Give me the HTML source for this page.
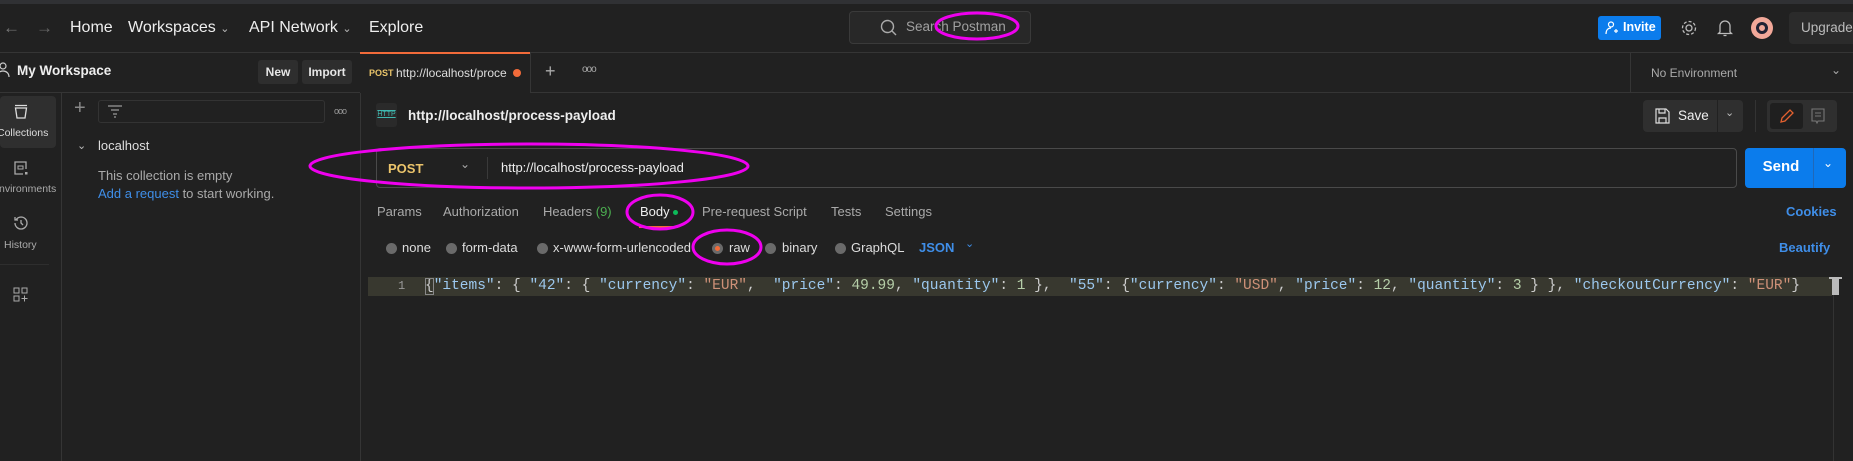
<!DOCTYPE html>
<html><head><meta charset="utf-8"><style>
*{margin:0;padding:0;box-sizing:border-box}
body{width:1853px;height:461px;background:#212121;font-family:"Liberation Sans",sans-serif;color:#e6e6e6;position:relative;overflow:hidden;font-size:13px}
.a{position:absolute;white-space:nowrap}
.ln{position:absolute;background:#353535}
.mono{font-family:"Liberation Mono",monospace}
</style></head><body>
<div class="a" style="left:0;top:0;width:1853px;height:4px;background:#303134"></div>
<div class="ln" style="left:0;top:52px;width:1853px;height:1px"></div>
<div class="ln" style="left:360px;top:92px;width:1493px;height:1px"></div>
<div class="ln" style="left:0;top:92px;width:360px;height:1px"></div>
<div class="ln" style="left:360px;top:52px;width:1px;height:409px"></div>
<div class="ln" style="left:61px;top:92px;width:1px;height:369px"></div>
<div class="ln" style="left:1630px;top:52px;width:1px;height:40px"></div>

<!-- top nav -->
<div class="a" style="left:3px;top:18px;color:#777;font-size:17px">←</div>
<div class="a" style="left:36px;top:18px;color:#666;font-size:17px">→</div>
<div class="a" style="left:70px;top:19px;font-size:16px;color:#eee">Home</div>
<div class="a" style="left:128px;top:19px;font-size:16px;color:#eee">Workspaces <span style="font-size:11px;color:#bbb">⌄</span></div>
<div class="a" style="left:249px;top:19px;font-size:16px;color:#eee">API Network <span style="font-size:11px;color:#bbb">⌄</span></div>
<div class="a" style="left:369px;top:19px;font-size:16px;color:#eee">Explore</div>
<div class="a" style="left:849px;top:11px;width:182px;height:33px;background:#282828;border:1px solid #3a3a3a;border-radius:4px"></div>
<svg class="a" style="left:880px;top:19px" width="18" height="18" viewBox="0 0 18 18"><circle cx="7.5" cy="7.5" r="6" fill="none" stroke="#aaa" stroke-width="1.4"/><path d="M12 12l4 4" stroke="#aaa" stroke-width="1.4"/></svg>
<div class="a" style="left:906px;top:19px;font-size:13.5px;color:#a0a0a0">Search Postman</div>

<div class="a" style="left:1598px;top:16px;width:63px;height:24px;background:#0b7cec;border-radius:3px"></div>
<svg class="a" style="left:1605px;top:21px" width="14" height="14" viewBox="0 0 14 14"><circle cx="6" cy="3.5" r="2.5" fill="none" stroke="#fff" stroke-width="1.2"/><path d="M1 13c0-4 2-6 5-6M9 10h4M11 8v4" stroke="#fff" stroke-width="1.2" fill="none"/></svg>
<div class="a" style="left:1623px;top:20px;font-size:12.5px;font-weight:bold;color:#fff">Invite</div>
<svg class="a" style="left:1680px;top:19px" width="18" height="18" viewBox="0 0 18 18"><circle cx="9" cy="9" r="3" fill="none" stroke="#bbb" stroke-width="1.3"/><circle cx="9" cy="9" r="6.5" fill="none" stroke="#bbb" stroke-width="1.3" stroke-dasharray="3 2"/></svg>
<svg class="a" style="left:1717px;top:18px" width="16" height="20" viewBox="0 0 16 20"><path d="M3 14V8a5 5 0 0110 0v6l1.5 1.5h-13z M6.5 17.5h3" fill="none" stroke="#bbb" stroke-width="1.3"/></svg>
<div class="a" style="left:1751px;top:17px;width:22px;height:22px;border-radius:50%;background:#f2a899"></div>
<div class="a" style="left:1756px;top:22px;width:12px;height:12px;border-radius:50%;border:3px solid #223;background:#f2a899"></div>
<div class="a" style="left:1789px;top:12px;width:70px;height:32px;background:#2b2b2b;border-radius:4px"></div>
<div class="a" style="left:1801px;top:20px;font-size:13.5px;color:#bbb">Upgrade</div>

<!-- row 2 -->
<svg class="a" style="left:-3px;top:62px" width="14" height="16" viewBox="0 0 14 16"><circle cx="6" cy="4" r="3" fill="none" stroke="#ccc" stroke-width="1.2"/><path d="M0 15c0-4 3-6 6-6s6 2 6 6" fill="none" stroke="#ccc" stroke-width="1.2"/></svg>
<div class="a" style="left:17px;top:63px;font-size:13.5px;font-weight:bold;color:#eee">My Workspace</div>
<div class="a" style="left:258px;top:60px;width:40px;height:24px;background:#2e2e2e;border-radius:3px;text-align:center;line-height:24px;font-size:12px;font-weight:bold">New</div>
<div class="a" style="left:302px;top:60px;width:50px;height:24px;background:#2e2e2e;border-radius:3px;text-align:center;line-height:24px;font-size:12px;font-weight:bold">Import</div>

<div class="a" style="left:360px;top:52px;width:170px;height:41px;background:#212121;border-top:2px solid #f26b3a"></div>
<div class="a" style="left:369px;top:68px;font-size:9px;font-weight:bold;color:#e9c46a">POST</div>
<div class="a" style="left:396px;top:66px;font-size:12px;color:#ddd">http://localhost/proce</div>
<div class="a" style="left:513px;top:69px;width:8px;height:8px;border-radius:50%;background:#f26b3a"></div>
<div class="ln" style="left:530px;top:53px;width:1px;height:40px"></div>
<div class="a" style="left:545px;top:61px;font-size:18px;color:#aaa">+</div>
<div class="a" style="left:582px;top:64px;font-size:10px;color:#aaa;letter-spacing:-1px">ooo</div>
<div class="a" style="left:1651px;top:66px;font-size:12px;color:#aaa">No Environment</div>
<div class="a" style="left:1831px;top:63px;font-size:12px;color:#aaa">⌄</div>

<!-- icon column -->
<div class="a" style="left:0;top:96px;width:56px;height:52px;background:#2f2f2f;border-radius:4px"></div>
<svg class="a" style="left:13px;top:104px" width="16" height="16" viewBox="0 0 16 16"><path d="M2 1.5h12M2.5 4h11l-1.5 10h-8z" fill="none" stroke="#ddd" stroke-width="1.3"/></svg>
<div class="a" style="left:-3px;top:127px;font-size:10.5px;color:#ddd">Collections</div>
<svg class="a" style="left:13px;top:160px" width="16" height="16" viewBox="0 0 16 16"><path d="M13 9V2H2v12h8" fill="none" stroke="#aaa" stroke-width="1.3"/><rect x="5" y="6" width="5" height="3" fill="none" stroke="#aaa"/><rect x="12" y="12" width="2.5" height="2.5" fill="#aaa"/></svg>
<div class="a" style="left:-8px;top:183px;font-size:10.5px;color:#aaa">Environments</div>
<svg class="a" style="left:12px;top:214px" width="18" height="18" viewBox="0 0 18 18"><path d="M3 9a6 6 0 106-6 6 6 0 00-5 3M3 3v3h3M9 6v3l2 2" fill="none" stroke="#aaa" stroke-width="1.3"/></svg>
<div class="a" style="left:4px;top:239px;font-size:10.5px;color:#aaa">History</div>
<div class="ln" style="left:0;top:264px;width:49px;height:1px;background:#2e2e2e"></div>
<svg class="a" style="left:13px;top:287px" width="16" height="16" viewBox="0 0 16 16"><rect x="1" y="1" width="5" height="5" fill="none" stroke="#aaa"/><rect x="9" y="1" width="5" height="5" fill="none" stroke="#aaa"/><rect x="1" y="9" width="5" height="5" fill="none" stroke="#aaa"/><path d="M11.5 8.5v6M8.5 11.5h6" stroke="#aaa"/></svg>

<!-- sidebar list -->
<div class="a" style="left:74px;top:97px;font-size:20px;color:#888">+</div>
<div class="a" style="left:98px;top:100px;width:227px;height:23px;border:1px solid #333;border-radius:3px"></div>
<svg class="a" style="left:107px;top:104px" width="16" height="14" viewBox="0 0 16 14"><path d="M1 2h14M4 6h8M6 10h4M7 13h2" stroke="#999" stroke-width="1.2"/></svg>
<div class="a" style="left:334px;top:106px;font-size:9px;color:#999;letter-spacing:-1px">ooo</div>
<div class="a" style="left:77px;top:139px;font-size:11px;color:#bbb">⌄</div>
<div class="a" style="left:98px;top:138px;font-size:13px;color:#ddd">localhost</div>
<div class="a" style="left:98px;top:168px;font-size:13px;color:#aaa">This collection is empty</div>
<div class="a" style="left:98px;top:186px;font-size:13px;color:#aaa"><span style="color:#3f8ee8">Add a request</span> to start working.</div>

<!-- request title -->
<div class="a" style="left:376px;top:103px;width:21px;height:24px;background:#2a2a2a;border-radius:3px;font-size:7px;color:#3fb9b0;text-align:center;line-height:24px;text-decoration:underline overline">HTTP</div>
<div class="a" style="left:408px;top:108px;font-size:13.5px;font-weight:bold;color:#eee">http://localhost/process-payload</div>
<div class="a" style="left:1643px;top:100px;width:74px;height:32px;background:#2f2f2f;border-radius:4px 0 0 4px"></div>
<div class="a" style="left:1718px;top:100px;width:25px;height:32px;background:#2f2f2f;border-radius:0 4px 4px 0"></div>
<svg class="a" style="left:1655px;top:108px" width="15" height="16" viewBox="0 0 15 16"><path d="M1 1h10l3 3v11H1z M4 1v4h6V1 M4 15v-5h7v5" fill="none" stroke="#ddd" stroke-width="1.2"/></svg>
<div class="a" style="left:1678px;top:108px;font-size:13.5px;color:#eee">Save</div>
<div class="a" style="left:1725px;top:106px;font-size:11px;color:#bbb">⌄</div>
<div class="ln" style="left:1755px;top:100px;width:1px;height:32px;background:#333"></div>
<div class="a" style="left:1767px;top:100px;width:70px;height:32px;background:#2f2f2f;border-radius:4px"></div>
<div class="a" style="left:1770px;top:103px;width:33px;height:26px;background:#1f1f1f;border-radius:3px"></div>
<svg class="a" style="left:1779px;top:108px" width="16" height="16" viewBox="0 0 16 16"><path d="M2 14l1-4 8-8 3 3-8 8z" fill="none" stroke="#e2602f" stroke-width="1.3"/></svg>
<svg class="a" style="left:1811px;top:108px" width="14" height="16" viewBox="0 0 14 16"><path d="M1 1h12v12H7l-1 2-1-2H1z M4 5h6M4 8h6" fill="none" stroke="#777" stroke-width="1.1"/></svg>

<!-- URL bar -->
<div class="a" style="left:376px;top:148px;width:1361px;height:40px;border:1px solid #4a4a4a;border-radius:4px"></div>
<div class="a" style="left:388px;top:161px;font-size:13px;font-weight:bold;color:#ebc46b">POST</div>
<div class="a" style="left:460px;top:157px;font-size:12px;color:#aaa">⌄</div>
<div class="ln" style="left:487px;top:157px;width:1px;height:22px;background:#3a3a3a"></div>
<div class="a" style="left:501px;top:160px;font-size:13px;color:#eee">http://localhost/process-payload</div>
<div class="a" style="left:1745px;top:148px;width:101px;height:40px;background:#0b7cec;border-radius:4px"></div>
<div class="ln" style="left:1813px;top:148px;width:1px;height:40px;background:#2068b8"></div>
<div class="a" style="left:1749px;top:158px;width:64px;text-align:center;font-size:15px;font-weight:bold;color:#fff">Send</div>
<div class="a" style="left:1823px;top:156px;font-size:12px;color:#fff">⌄</div>

<!-- tabs -->
<div class="a" style="left:377px;top:204px;font-size:13px;color:#aaa">Params</div>
<div class="a" style="left:443px;top:204px;font-size:13px;color:#aaa">Authorization</div>
<div class="a" style="left:543px;top:204px;font-size:13px;color:#aaa">Headers <span style="color:#4caf50">(9)</span></div>
<div class="a" style="left:640px;top:204px;font-size:13px;color:#eee">Body</div>
<div class="a" style="left:673px;top:210px;width:5px;height:5px;border-radius:50%;background:#0dbb5a"></div>
<div class="a" style="left:639px;top:226px;width:39px;height:2px;background:#f26b3a"></div>
<div class="a" style="left:702px;top:204px;font-size:13px;color:#aaa">Pre-request Script</div>
<div class="a" style="left:831px;top:204px;font-size:13px;color:#aaa">Tests</div>
<div class="a" style="left:885px;top:204px;font-size:13px;color:#aaa">Settings</div>
<div class="a" style="left:1786px;top:204px;font-size:13px;font-weight:bold;color:#3f8ee8">Cookies</div>

<!-- radios -->
<div class="a" style="left:386px;top:243px;width:11px;height:11px;border-radius:50%;background:#6a6a6a"></div>
<div class="a" style="left:402px;top:240px;font-size:13px;color:#ddd">none</div>
<div class="a" style="left:446px;top:243px;width:11px;height:11px;border-radius:50%;background:#6a6a6a"></div>
<div class="a" style="left:462px;top:240px;font-size:13px;color:#ddd">form-data</div>
<div class="a" style="left:537px;top:243px;width:11px;height:11px;border-radius:50%;background:#6a6a6a"></div>
<div class="a" style="left:553px;top:240px;font-size:13px;color:#ddd">x-www-form-urlencoded</div>
<div class="a" style="left:712px;top:243px;width:11px;height:11px;border-radius:50%;background:#6a6a6a"></div>
<div class="a" style="left:715px;top:246px;width:5px;height:5px;border-radius:50%;background:#f26b3a"></div>
<div class="a" style="left:729px;top:240px;font-size:13px;color:#ddd">raw</div>
<div class="a" style="left:765px;top:243px;width:11px;height:11px;border-radius:50%;background:#6a6a6a"></div>
<div class="a" style="left:782px;top:240px;font-size:13px;color:#ddd">binary</div>
<div class="a" style="left:835px;top:243px;width:11px;height:11px;border-radius:50%;background:#6a6a6a"></div>
<div class="a" style="left:851px;top:240px;font-size:13px;color:#ddd">GraphQL</div>
<div class="a" style="left:919px;top:240px;font-size:13px;font-weight:bold;color:#3f8ee8">JSON</div>
<div class="a" style="left:965px;top:237px;font-size:11px;color:#3f8ee8">⌄</div>
<div class="a" style="left:1779px;top:240px;font-size:13px;font-weight:bold;color:#3f8ee8">Beautify</div>

<!-- editor -->
<div class="a" style="left:368px;top:277px;width:1464px;height:19px;background:#38382f"></div>
<div class="a mono" style="left:398px;top:279px;font-size:12px;color:#999">1</div>
<div class="a mono" style="left:425px;top:278px;font-size:14.5px;color:#ccc;white-space:pre">{<span style="color:#9cc8ee">"items"</span>: { <span style="color:#9cc8ee">"42"</span>: { <span style="color:#9cc8ee">"currency"</span>: <span style="color:#ce9178">"EUR"</span>,  <span style="color:#9cc8ee">"price"</span>: <span style="color:#b5cea8">49.99</span>, <span style="color:#9cc8ee">"quantity"</span>: <span style="color:#b5cea8">1</span> },  <span style="color:#9cc8ee">"55"</span>: {<span style="color:#9cc8ee">"currency"</span>: <span style="color:#ce9178">"USD"</span>, <span style="color:#9cc8ee">"price"</span>: <span style="color:#b5cea8">12</span>, <span style="color:#9cc8ee">"quantity"</span>: <span style="color:#b5cea8">3</span> } }, <span style="color:#9cc8ee">"checkoutCurrency"</span>: <span style="color:#ce9178">"EUR"</span>}</div>
<div class="a" style="left:425px;top:278px;width:9px;height:17px;border:1px solid #888"></div>
<div class="ln" style="left:1833px;top:277px;width:1px;height:184px;background:#333"></div>
<div class="a" style="left:1832px;top:278px;width:7px;height:17px;background:#bbb"></div>
<div class="a" style="left:1829px;top:277px;width:13px;height:2px;background:#bbb"></div>

<!-- annotations -->
<svg class="a" style="left:0;top:0" width="1853" height="461">
<g fill="none" stroke="#ee00ee" stroke-width="3">
<ellipse cx="977" cy="26" rx="41" ry="13"/>
<ellipse cx="529" cy="166" rx="219" ry="22"/>
<ellipse cx="660" cy="212" rx="33" ry="17"/>
<ellipse cx="727" cy="247" rx="34" ry="17"/>
</g></svg>
</body></html>
